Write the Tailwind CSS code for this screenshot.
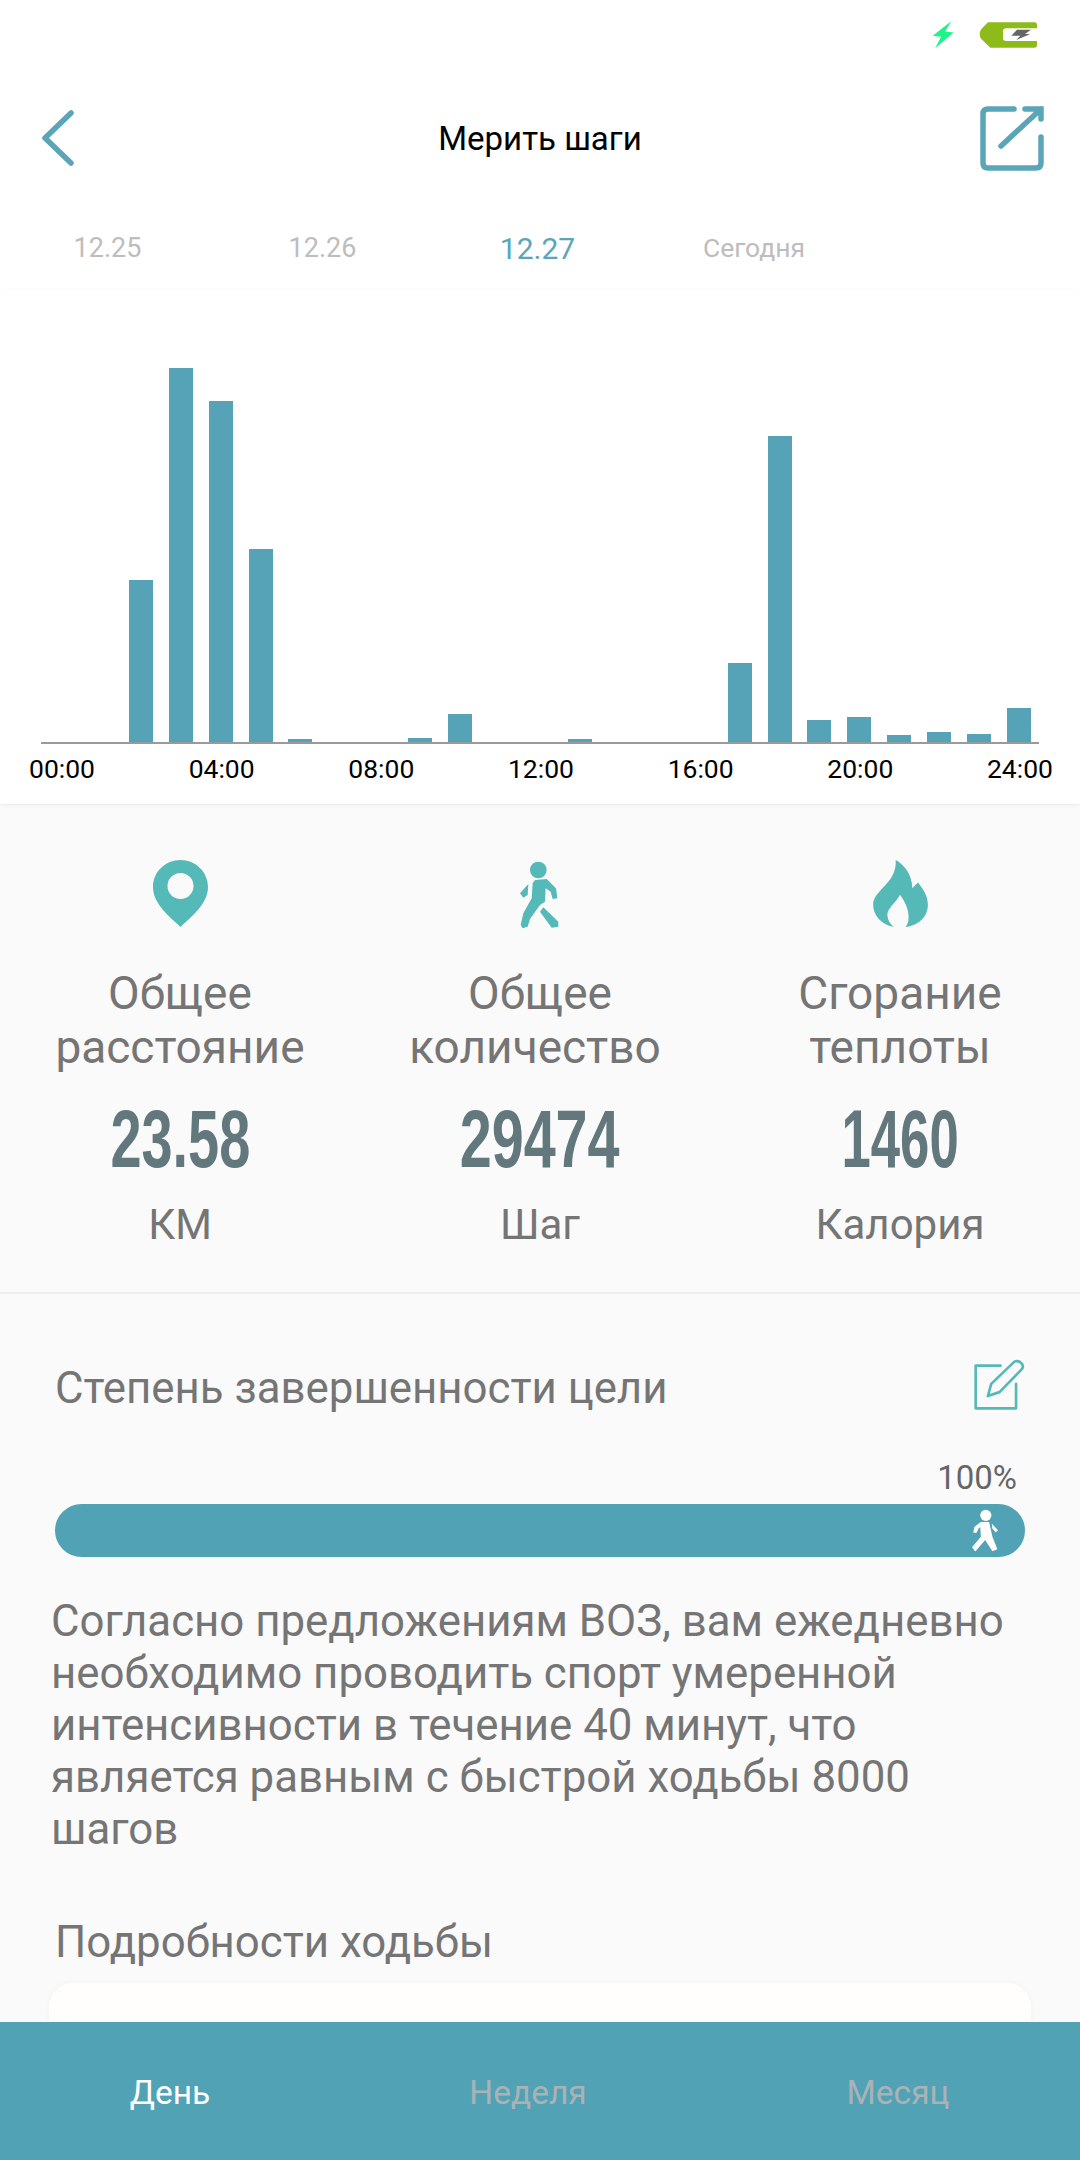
<!DOCTYPE html>
<html lang="ru">
<head>
    <meta charset="UTF-8">
    <meta name="viewport" content="width=device-width, initial-scale=1.0">
    <title>Мерить шаги</title>
    <script src="https://cdn.jsdelivr.net/npm/@tailwindcss/browser@4"></script>
</head>
<body class="bg-white font-['Roboto',sans-serif]">
    <div class="w-[1080px] h-[2160px] flex flex-col overflow-hidden">
        <main class="flex-1 min-h-0 overflow-hidden">
            <!-- Status bar -->
            <div class="h-[70px] flex items-center justify-end gap-[21px] pr-[42px]">
                <svg width="27" height="32" viewBox="90 55 80 95"><path d="M153 62L98 105L123 108L105 142L160 95L135 92Z" fill="#1bf58a"/></svg>
                <svg width="60" height="28" viewBox="235 58 180 84">
                    <path d="M265 62H405q7 0 7 7V80H320q-10 0-10 8V110q0 8 10 8H412V130q0 8-8 8H272L245 112q-10-15 0-30Z" fill="#8dbb1a"/>
                    <path d="M352 84H394L376 97H392L350 115L362 102H335Z" fill="#666"/>
                </svg>
            </div>

            <!-- Header -->
            <div class="h-[136px] grid grid-cols-3 items-center pl-[40px] pr-[34px]">
                <svg width="36" height="56" viewBox="0 2 36 56" fill="none" stroke="#5ba5b9" stroke-width="5.5" stroke-linecap="round" stroke-linejoin="round"><path d="M31 5L5 30L31 55"/></svg>
                <h1 class="w-[1080px] pr-[6px] justify-self-center text-center text-[33px] text-black leading-none">Мерить шаги</h1>
                <svg class="justify-self-end" width="68" height="68" viewBox="978 104 68 68" fill="none" stroke="#5ba5b9" stroke-width="5.5" stroke-linecap="round">
                    <path d="M1014 109H988q-5 0-5 5V163q0 5 5 5H1036q5 0 5-5V137"/>
                    <path d="M1001 146L1041 109M1025 109H1041V119"/>
                </svg>
            </div>

            <!-- Date tabs -->
            <div class="h-[84px] grid grid-cols-5 items-center text-center text-[27px] text-[#bdbdbd] pr-[5px]">
                <span>12.25</span>
                <span>12.26</span>
                <span class="text-[30px] text-[#5ba5b9]">12.27</span>
                <span class="pl-[3px] text-[26.5px]">Сегодня</span>
            </div>

            <!-- Chart -->
            <div class="relative h-[514px] bg-white shadow-[0_1px_3px_rgba(0,0,0,0.08)]">
                <div id="bars" class="ml-[41px] w-[998px] h-[452px] grid grid-cols-[repeat(25,1fr)] items-end justify-items-center border-b-2 border-[#9a9a9a] box-content"></div>
                <div class="flex justify-between pl-[29px] pr-[27px] pt-[7px] text-[26.5px] leading-[36px] text-black">
                    <span>00:00</span><span>04:00</span><span>08:00</span><span>12:00</span><span>16:00</span><span>20:00</span><span>24:00</span>
                </div>
            </div>

            <div class="bg-[#fafafa] h-[1218px]">
                <!-- Totals -->
                <section class="h-[490px] border-b-2 border-[#eeeeee] grid grid-cols-3 pt-[56px] text-center text-[#757575] text-[46px] leading-[54px]">
                    <div class="flex flex-col items-center">
                        <svg width="55" height="67" viewBox="0 0 55 67"><path fill-rule="evenodd" d="M27.5 0C12.3 0 0 12 0 27C0 44 17 57 27.5 67C38 57 55 44 55 27C55 12 42.7 0 27.5 0ZM27.5 13A13 13 0 1 1 27.5 39A13 13 0 1 1 27.5 13Z" fill="#55b9b8"/></svg>
                        <div class="mt-[39px]">Общее<br>расстояние</div>
                        <div class="mt-[25px] h-[80px] leading-[80px] text-[81px] font-bold text-[#62787d] font-['Liberation_Sans',sans-serif] scale-x-[0.69]">23.58</div>
                        <div class="mt-[19px] text-[42px]">КМ</div>
                    </div>
                    <div class="flex flex-col items-center">
                        <svg width="44" height="70" viewBox="115 55 130 210" fill="#55b9b8">
                            <circle cx="175" cy="85" r="25"/>
                            <path d="M165 115L200 112L228 140L232 170L218 172L212 150L197 140L195 180L180 190L150 232L143 255L128 260L122 250L130 215L155 170L158 125Z"/>
                            <path d="M145 127L120 155L130 168L143 160Z"/>
                            <path d="M190 197L180 210L215 258L235 255L235 240Z"/>
                        </svg>
                        <div class="mt-[36px]">Общее<br><span class="pr-[10px]">количество</span></div>
                        <div class="mt-[25px] h-[80px] leading-[80px] text-[81px] font-bold text-[#62787d] font-['Liberation_Sans',sans-serif] scale-x-[0.71]">29474</div>
                        <div class="mt-[19px] text-[42px]">Шаг</div>
                    </div>
                    <div class="flex flex-col items-center">
                        <svg width="55" height="67" viewBox="97 60 165 202" fill="#55b9b8"><path d="M165 60C185 70 215 100 215 145L232 128C250 150 262 170 262 195C262 235 230 258 195 262C210 245 208 205 178 165C165 190 140 205 140 225C140 240 150 255 160 262C120 255 97 225 97 195C97 150 170 130 165 60Z"/></svg>
                        <div class="mt-[39px]">Сгорание<br>теплоты</div>
                        <div class="mt-[25px] h-[80px] leading-[80px] text-[81px] font-bold text-[#62787d] font-['Liberation_Sans',sans-serif] scale-x-[0.65]">1460</div>
                        <div class="mt-[19px] text-[42px]">Калория</div>
                    </div>
                </section>

                <!-- Goal -->
                <section class="text-[#757575] bg-[#fafafb] h-[726px]">
                    <div class="h-[190px] pt-[67px] pl-[55px] pr-[54px] flex items-start justify-between">
                        <h2 class="text-[43.8px] leading-[54px]">Степень завершенности цели</h2>
                        <svg class="-mt-[2px]" width="53" height="53" viewBox="220 60 160 160" fill="none" stroke="#55b9b8" stroke-width="8" stroke-linejoin="round" stroke-linecap="round">
                            <path d="M303 80H228V209H350V135"/>
                            <path d="M265 172L275 135L345 68Q358 62 368 75Q374 85 366 92L300 160Z"/>
                        </svg>
                    </div>
                    <div class="mt-[-24px] pr-[63px] text-right text-[33px] leading-[36px] text-[#666666]">100%</div>
                    <div class="mx-[55px] mt-[8px] h-[53px] rounded-full bg-[#52a2b6] flex items-center justify-end pr-[26px]">
                        <svg width="28" height="46" viewBox="215 505 85 135" fill="#fff">
                            <circle cx="260" cy="525" r="17"/>
                            <path d="M245 545H270L280 590L295 628L280 634L258 600L228 635L218 622L245 590L243 560L238 565L232 578L222 578L225 560Z"/>
                            <path d="M278 550L297 570L290 577L280 565Z"/>
                        </svg>
                    </div>
                    <p class="pl-[51px] pr-[41px] mt-[38px] text-[43.8px] leading-[52px]">Согласно предложениям ВОЗ, вам ежедневно необходимо проводить спорт умеренной интенсивности в течение 40 минут, что является равным с быстрой ходьбы 8000 шагов</p>
                    <h2 class="pl-[55px] mt-[60px] text-[43.8px] leading-[54px]">Подробности ходьбы</h2>
                    <div class="mx-[49px] mt-[14px] h-[80px] rounded-t-[24px] bg-[#fffefd] shadow-[0_0_6px_rgba(0,0,0,0.03)]"></div>
                </section>
            </div>
        </main>

        <!-- Bottom tabs -->
        <nav class="h-[138px] shrink-0 pt-[5px] bg-[#52a2b6] grid grid-cols-3 items-center text-center text-[33.5px] text-[#a9b3b6]">
            <span class="pr-[20px] text-white">День</span>
            <span class="pr-[24px]">Неделя</span>
            <span class="pr-[4px]">Месяц</span>
        </nav>
    </div>

    <script>
        // Height of the bar for each hour, in px
        const steps = { 2: 162, 3: 374, 4: 341, 5: 193, 6: 3, 9: 4, 10: 28, 13: 3, 17: 79, 18: 306, 19: 22, 20: 25, 21: 7, 22: 10, 23: 8, 24: 34 };
        const bars = document.getElementById('bars');
        for (let hour = 0; hour <= 24; hour++) {
            const bar = document.createElement('div');
            bar.className = 'w-[24px] bg-[#56a3b7]';
            bar.style.height = (steps[hour] || 0) + 'px';
            bars.appendChild(bar);
        }
    </script>
</body>
</html>
